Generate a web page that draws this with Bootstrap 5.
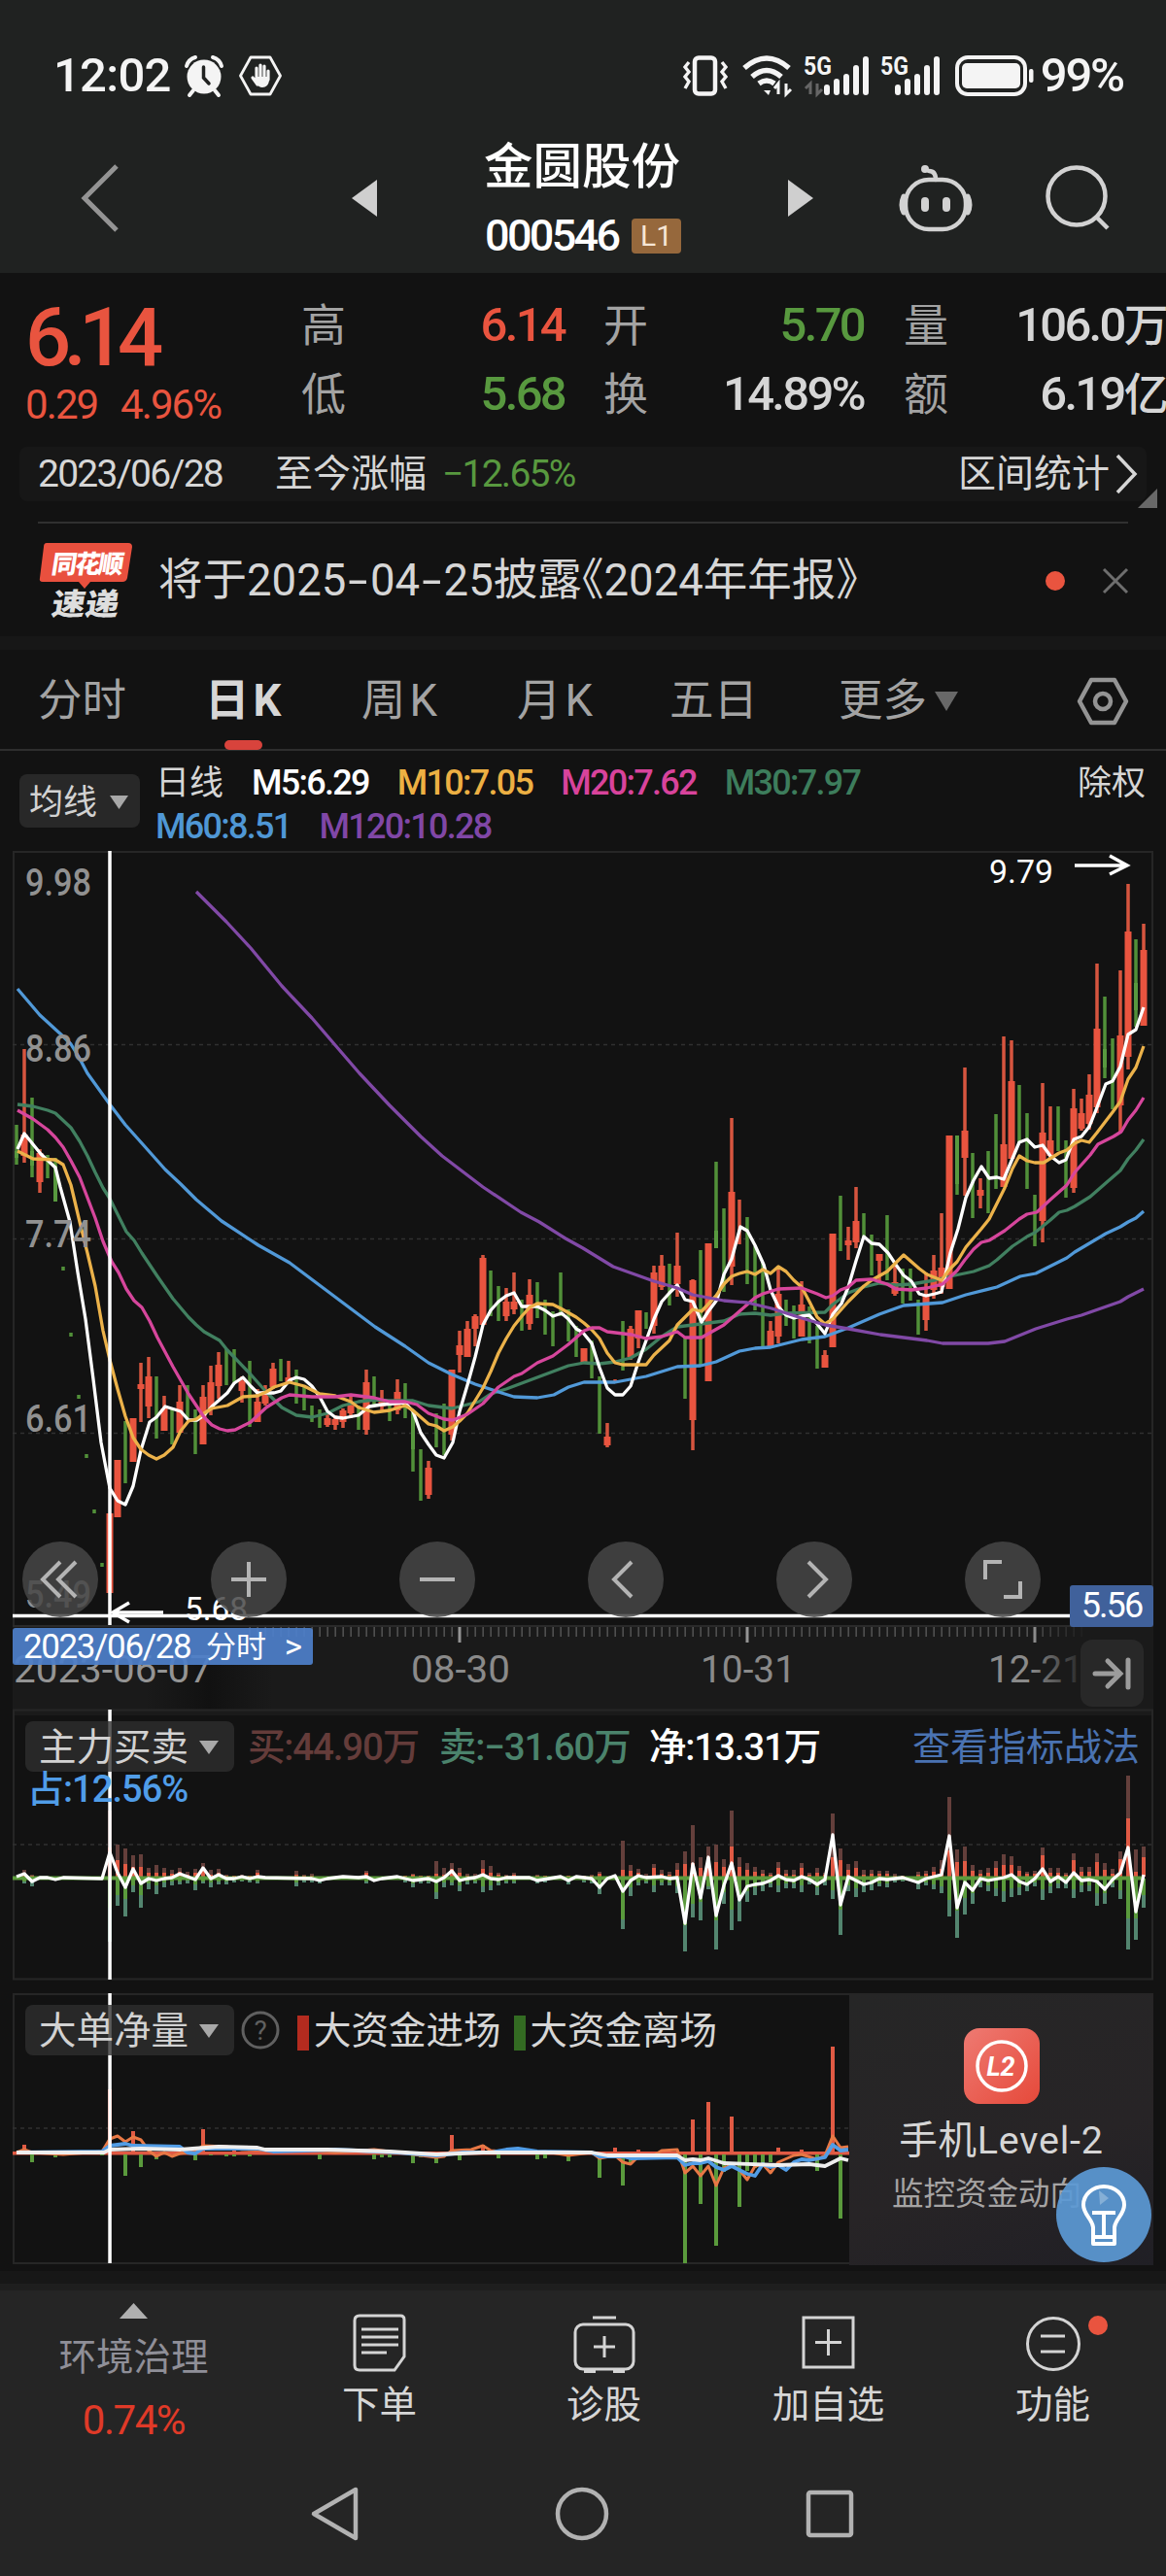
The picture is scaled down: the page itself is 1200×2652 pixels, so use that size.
<!doctype html>
<html lang="zh-CN">
<head>
  <meta charset="utf-8">
  <meta name="viewport" content="width=device-width, initial-scale=1">
  <title>金圆股份 000546</title>
  <link href="https://cdn.jsdelivr.net/npm/bootstrap@5.3.0/dist/css/bootstrap.min.css" rel="stylesheet">
  <style>
    :root {
      --up: #e9543f;
      --down: #58993f;
      --fg: #d6d6d6;
      --muted: #a3a3a3;
      --ink: #121212;
      --bar: #252525;
    }
    body {
      width: 1200px;
      background: var(--ink);
      color: var(--fg);
      font-family: Roboto, "Noto Sans CJK SC", sans-serif;
      line-height: 1;
      overflow-x: hidden;
    }
    svg { display: block; flex-shrink: 0; overflow: visible; }
    svg text { font-family: Roboto, "Noto Sans CJK SC", sans-serif; }
    .din { letter-spacing: -.055em; white-space: nowrap; }
    .c-up { color: var(--up); }
    .c-down { color: var(--down); }

    /* Status bar and title */
    .top-area { background: #202221; height: 281px; }
    .status-row { height: 134px; padding: 21px 44px 0 55px; color: #f4f4f4; }
    .status-row .clock { font-size: 49px; font-weight: 500; letter-spacing: -.015em; width: 135px; }
    .status-row .power { font-size: 49px; font-weight: 500; letter-spacing: -.045em; margin-left: 6px; }
    .status-row .wifi { margin-left: 14px; }
    .status-row .sim { margin-left: 11px; }
    .status-row .battery { margin-left: 14px; }
    .title-row { height: 144px; display: grid; grid-template-columns: 83px 279px 137px 202px 110px 114px 151px 1fr; align-items: center; }
    .title-row > svg { margin-top: -6px; }
    .title-row .go-next { grid-column: 6; }
    .stock-name { font-size: 50.5px; font-weight: 500; line-height: 76px; height: 73px; margin-left: -1px; color: #fff; }
    .stock-code { font-size: 45px; font-weight: 500; line-height: 72px; letter-spacing: -.06em; color: #fff; }
    .level-tag { width: 51px; height: 36px; font-size: 30px; line-height: 36px; background: #96683c; color: #f6e6d6; border-radius: 4px; }

    /* Quote */
    .quote { height: 179px; padding: 18px 0 0 26px; display: grid; grid-template-columns: 284px 271px 268px 270px; }
    .quote .col-b { margin: 0 -40px 0 40px; }
    .quote .col-c { margin: 0 -81px 0 81px; }
    .quote .pair { height: 71px; font-size: 46px; }
    .quote .lbl { color: var(--muted); }
    .quote .pair .din { font-size: 49px; font-weight: 500; }
    .quote .unit { font-size: 46px; }
    .last-price { font-size: 83px; font-weight: 500; height: 84px; line-height: 97px; letter-spacing: -.09em; }
    .last-diff { font-size: 42px; line-height: 68px; letter-spacing: -.045em; }
    .last-diff span:first-child { width: 98px; }
    .range-row { margin: 0 20px; height: 56px; padding: 0 8px 0 19px; background: #171717; border-radius: 8px; font-size: 39px; }
    .range-row .din { letter-spacing: -.045em; }
    .range-row .since { margin-left: 54px; }
    .corner-mark { position: absolute; right: 9px; top: 43px; }
    .rule { height: 2px; background: #303030; margin: 21px 39px 0; }
    .news-row { height: 116px; padding: 2px 39px 0 40px; font-size: 45.5px; }
    .news-row .headline { margin-left: 25px; }
    .news-row .hy { display: inline-block; transform: scaleX(1.6); margin: 0 6px; }
    .news-row .open-mark { margin-left: -.5em; }
    .news-row .dot { width: 20px; height: 20px; background: var(--up); }
    .news-row .shut { margin-left: 39px; }
    .band { height: 14px; background: #171717; }

    /* Period tabs */
    .tabs-row { height: 104px; padding: 3px 0 0 39px; display: grid; grid-template-columns: 176px 157px 160px 157px 174px 246px 1fr; align-items: center; font-size: 45.5px; color: var(--muted); border-bottom: 2px solid #2e2e2e; }
    .tabs-row .k { margin-left: 4px; }
    .tabs-row .on { color: var(--fg); font-weight: 700; left: -4px; }
    .tabs-row .on::after { content: ""; position: absolute; left: 20px; top: 63px; width: 39px; height: 10px; border-radius: 5px; background: #d8433c; }
    .tabs-row .more svg { margin-left: 8px; }

    /* Moving averages */
    .ma-row { height: 103px; padding-left: 20px; }
    .pick { background: rgba(46, 46, 46, .78); border-radius: 8px; color: #d2d2d2; white-space: nowrap; }
    .ma-row .pick { width: 124px; height: 55px; margin-top: 24px; padding: 3px 12px 0 10px; font-size: 35px; }
    .ma-list { margin-left: 16px; width: 800px; padding-top: 11px; font-size: 36px; line-height: 45px; column-gap: 29px; font-weight: 500; letter-spacing: -.048em; }
    .ma-list .kind { font-size: 35px; font-weight: 400; letter-spacing: 0; }
    .ma-list .m5 { color: #fff; }
    .ma-list .m10 { color: #edb043; }
    .ma-list .m20 { color: #d8439c; }
    .ma-list .m30 { color: #3d7d5c; }
    .ma-list .m60 { color: #4f97d5; }
    .ma-list .m120 { color: #8047a6; }
    .adjust { font-size: 35px; line-height: 67px; margin-right: 21px; }

    /* Charts */
    .k-area { height: 798px; }
    .k-tools { position: absolute; left: 23px; top: 711px; gap: 116px; }
    .k-tools span { width: 78px; height: 78px; border-radius: 50%; background: rgba(70, 70, 70, .85); }
    .price-tag { position: absolute; right: 13px; top: 756px; width: 86px; height: 43px; background: #40619b; color: #fff; font-size: 36px; line-height: 43px; border-radius: 3px; z-index: 2; }
    .date-tag { position: absolute; left: 13px; top: 2px; width: 309px; height: 38px; padding: 0 11px; background: rgba(78, 127, 201, .93); color: #fff; font-size: 35px; border-radius: 3px; }
    .date-tag .din { letter-spacing: -.04em; width: 188px; }
    .date-tag .kind { font-size: 31px; }
    .axis-area { height: 86px; }
    .to-end { position: absolute; left: 1112px; top: 14px; width: 65px; height: 69px; border-radius: 12px; background: #282828; }
    .sub-panel { height: 292px; }
    .sub-panel.last { height: 286px; }
    .sub-panel .plot { position: absolute; left: 0; top: 0; }
    .sub-head { position: relative; padding: 12px 27px 0 26px; font-size: 38.5px; height: 64px; white-space: nowrap; }
    .sub-head .pick { width: 215px; height: 52px; padding: 2px 16px 0 14px; }
    .sub-head .vals { height: 52px; font-weight: 500; letter-spacing: -.03em; padding-top: 3px; }
    .vals .buy { color: #643c3a; margin-left: 14px; width: 197px; }
    .vals .sell { color: #4b836c; width: 216px; }
    .vals .sum { color: #fff; }
    .vals .tips { color: #4a73b2; font-weight: 400; letter-spacing: 0; font-size: 39px; margin-right: -13px; }
    .sub-note { position: relative; padding-left: 28px; font-size: 38px; line-height: 36px; color: #509de8; font-weight: 500; }
    .sub-note.din { letter-spacing: -.025em; }
    .legend-row { height: 52px; padding-top: 2px; }
    .legend-row .help { margin-left: 7px; }
    .key { width: 12px; height: 36px; margin: 4px 5px 0 13px; background: #336b22; }
    .key.in { background: #b42b1f; margin-left: 18px; }
    .promo { position: absolute; left: 874px; top: 1px; width: 313px; height: 279px; background: linear-gradient(160deg, #262626, #272426 60%, #201f25); }
    .promo .l2 { width: 78px; height: 78px; margin-top: 35px; border-radius: 16px; background: linear-gradient(135deg, #ee7a72, #e6493a); }
    .promo .name { font-size: 39.5px; line-height: 48px; margin-top: 14px; letter-spacing: .02em; }
    .promo .desc { font-size: 32.5px; line-height: 40px; margin: 11px 30px 0 0; color: #a5a3a3; }
    .bulb { position: absolute; left: 1087px; top: 179px; }

    /* Bottom bars */
    .foot-edge { height: 20px; background: linear-gradient(#171717 0 13px, #1e1e1e 13px); }
    .foot { height: 294px; background: var(--bar); }
    .foot-tabs { display: grid; grid-template-columns: 275px repeat(4, 231px); height: 170px; font-size: 38.5px; }
    .foot-tabs .cell { padding-top: 22px; }
    .foot-tabs .cap { margin-top: 9px; line-height: 46px; }
    .foot-tabs .sector { color: #8f8f98; padding-top: 13px; }
    .sector .name { margin-top: 17px; line-height: 46px; }
    .sector .rate { color: #e03a28; font-size: 42px; line-height: 83px; letter-spacing: -.035em; }
    .sys-nav { height: 120px; padding-left: 319px; }
    .sys-nav svg + svg { margin-left: 199px; }
  </style>
</head>
<body>
  <header class="top-area">
    <!-- Status bar -->
    <div class="status-row d-flex align-items-center">
      <span class="clock">12:02</span>
      <svg width="40" height="42" viewBox="0 0 40 42" fill="none" stroke="#f4f4f4" stroke-width="4" stroke-linecap="round">
        <circle cx="20" cy="22" r="17.500" fill="#f4f4f4" stroke="none"/>
        <path d="M2 11Q4 4 11 2M38 11Q36 4 29 2M9 36L5 41M31 36L35 41"/>
        <path d="M19.500 12V23L25 29" stroke="#202221" stroke-width="3.500"/>
      </svg>
      <svg class="ms-3" width="44" height="42" viewBox="0 0 44 42" fill="none" stroke="#f4f4f4" stroke-width="2.800" stroke-linejoin="round" stroke-linecap="round">
        <path d="M12 2H32L42.500 21L32 40H12L1.500 21Z"/>
        <path d="M18 24V13M22 22V10M26 22V11M30 25V16M14 23L19 30" stroke-width="3.200"/>
        <path d="M17 22H31V26Q30 33 24 33Q20 33 17 28Z" fill="#f4f4f4" stroke="none"/>
      </svg>
      <svg class="ms-auto" width="48" height="42" viewBox="0 0 48 42" fill="none" stroke="#f4f4f4" stroke-width="3.400">
        <rect x="13" y="2.500" width="21" height="37" rx="4" stroke-width="4.500"/>
        <path d="M7 7L3 12L7 17L3 22L7 27L3 34M41 7L45 12L41 17L45 22L41 27L45 34"/>
      </svg>
      <svg class="wifi" width="52" height="42" viewBox="0 0 52 42" fill="none" stroke="#f4f4f4" stroke-width="5.500">
        <path d="M2 13Q25 -7 48 13M10 22Q25 9 40 22M17 29Q25 23 33 29"/>
        <path d="M22 36L27 41L29 36Z" fill="#f4f4f4" stroke="none"/>
        <path d="M37 40V29L33 34M45 29V40L50 35" stroke-width="3"/>
      </svg>
      <svg class="sim" width="68" height="42" viewBox="0 0 68 42">
        <text x="0" y="20" font-size="26" font-weight="700" textLength="29" lengthAdjust="spacingAndGlyphs" fill="#f4f4f4">5G</text>
        <path d="M24 38V33M34 38V27M44 38V22M54 38V13M64 38V4" stroke="#f4f4f4" stroke-width="6" stroke-linecap="round"/>
        <path d="M7 40V29L2 34M14 29V40L19 35" stroke="#666" stroke-width="3" fill="none"/>
      </svg>
      <svg class="sim" width="63" height="42" viewBox="0 0 63 42">
        <text x="0" y="20" font-size="26" font-weight="700" textLength="29" lengthAdjust="spacingAndGlyphs" fill="#f4f4f4">5G</text>
        <path d="M18 38V33M28 38V27M38 38V22M48 38V13M58 38V4" stroke="#f4f4f4" stroke-width="6" stroke-linecap="round"/>
      </svg>
      <svg class="battery" width="82" height="42" viewBox="0 0 82 42">
        <rect x="2" y="2" width="70" height="38" rx="11" fill="none" stroke="#f4f4f4" stroke-width="4"/>
        <rect x="7" y="8" width="60" height="26" rx="5" fill="#f4f4f4"/>
        <rect x="76" y="14" width="4.500" height="14" rx="2" fill="#f4f4f4"/>
      </svg>
      <span class="power">99%</span>
    </div>
    <!-- Stock title -->
    <div class="title-row">
      <span></span>
      <svg width="40" height="70" viewBox="0 0 40 70" fill="none" stroke="#949494" stroke-width="5"><path d="M37 2L4 35L37 68"/></svg>
      <svg width="26" height="40" viewBox="0 0 26 40" fill="#cfcfcf"><path d="M26 1V39L0 20Z"/></svg>
      <div>
        <div class="stock-name text-nowrap">金圆股份</div>
        <div class="d-flex align-items-center justify-content-between">
          <span class="stock-code">000546</span>
          <span class="level-tag text-center">L1</span>
        </div>
      </div>
      <svg class="go-next" width="26" height="40" viewBox="0 0 26 40" fill="#cfcfcf"><path d="M0 1V39L26 20Z"/></svg>
      <svg width="76" height="70" viewBox="0 0 76 70" fill="none" stroke="#d2d2d2" stroke-width="4.500" stroke-linecap="round">
        <path d="M38 16Q38 7 31 7"/><circle cx="27" cy="5" r="3" fill="#d2d2d2" stroke-width="2"/>
        <rect x="7" y="16" width="62" height="51" rx="24"/>
        <path d="M5 33Q1 42 5 50M71 33Q75 42 71 50" stroke-width="5"/>
        <path d="M27 38V45M49 38V45" stroke-width="8"/>
      </svg>
      <svg width="68" height="66" viewBox="0 0 68 66" fill="none" stroke="#d2d2d2" stroke-width="4.500"><circle cx="32" cy="31" r="29.500"/><path d="M52 52L64 64"/></svg>
    </div>
  </header>

  <!-- Quote -->
  <section class="quote">
    <div>
      <div class="last-price text-nowrap c-up">6.14</div>
      <div class="last-diff text-nowrap c-up d-flex"><span>0.29</span><span>4.96%</span></div>
    </div>
    <div>
      <div class="pair d-flex align-items-center justify-content-between"><span class="lbl">高</span><span class="din c-up">6.14</span></div>
      <div class="pair d-flex align-items-center justify-content-between"><span class="lbl">低</span><span class="din c-down">5.68</span></div>
    </div>
    <div class="col-b">
      <div class="pair d-flex align-items-center justify-content-between"><span class="lbl">开</span><span class="din c-down">5.70</span></div>
      <div class="pair d-flex align-items-center justify-content-between"><span class="lbl">换</span><span class="din">14.89%</span></div>
    </div>
    <div class="col-c">
      <div class="pair d-flex align-items-center justify-content-between"><span class="lbl">量</span><span class="din">106.0<span class="unit">万</span></span></div>
      <div class="pair d-flex align-items-center justify-content-between"><span class="lbl">额</span><span class="din">6.19<span class="unit">亿</span></span></div>
    </div>
  </section>
  <div class="position-relative">
    <div class="range-row d-flex align-items-center">
      <span class="din">2023/06/28</span>
      <span class="since">至今涨幅</span>
      <span class="din c-down ms-3">−12.65%</span>
      <span class="ms-auto">区间统计</span>
      <svg class="ms-1" width="26" height="42" viewBox="0 0 26 42" fill="none" stroke="#d6d6d6" stroke-width="3.500"><path d="M4 2L22 21L4 40"/></svg>
    </div>
    <svg class="corner-mark" width="20" height="20" viewBox="0 0 20 20" fill="#686868"><path d="M20 0V20H0Z"/></svg>
    <div class="rule"></div>
    <div class="news-row d-flex align-items-center">
      <svg width="98" height="80" viewBox="0 0 98 80">
        <path d="M8 1H92Q96 1 96 5L91 37Q90 41 86 41H53L47 48L41 41H4Q0 41 1 37L5 5Q5 1 8 1Z" fill="#e9503e"/>
        <text transform="translate(12 32) skewX(-9)" font-size="26" font-weight="900" fill="#fff" textLength="74">同花顺</text>
        <text transform="translate(12 75) skewX(-9)" font-size="31" font-weight="900" fill="#dedede" textLength="69" lengthAdjust="spacingAndGlyphs">速递</text>
      </svg>
      <span class="headline text-nowrap">将于2025<span class="hy">-</span>04<span class="hy">-</span>25披露<span class="open-mark">《</span>2024年年报》</span>
      <span class="dot rounded-circle ms-auto"></span>
      <svg class="shut" width="26" height="26" viewBox="0 0 26 26" stroke="#6e6e6e" stroke-width="3"><path d="M1 1L25 25M25 1L1 25"/></svg>
    </div>
  </div>
  <div class="band"></div>

  <!-- Period tabs -->
  <nav class="tabs-row">
    <span>分时</span>
    <span class="on position-relative">日<span class="k">K</span></span>
    <span>周<span class="k">K</span></span>
    <span>月<span class="k">K</span></span>
    <span>五日</span>
    <span class="more d-flex align-items-center">更多<svg width="24" height="20" fill="#686868"><path d="M0 0H24L12 20Z"/></svg></span>
    <svg width="52" height="50" viewBox="0 0 52 50" fill="none" stroke="#949494" stroke-width="4.500" stroke-linejoin="round"><path d="M14 3H38L50 25L38 47H14L2 25Z"/><circle cx="26" cy="25" r="8"/></svg>
  </nav>

  <!-- Moving averages -->
  <section class="ma-row d-flex">
    <div class="pick d-flex align-items-center justify-content-between"><span>均线</span><svg width="19" height="14" fill="#a8a8a8"><path d="M0 0H19L9.500 14Z"/></svg></div>
    <div class="ma-list d-flex flex-wrap align-content-start">
      <span class="kind">日线</span>
      <span class="m5">M5:6.29</span>
      <span class="m10">M10:7.05</span>
      <span class="m20">M20:7.62</span>
      <span class="m30">M30:7.97</span>
      <span class="m60">M60:8.51</span>
      <span class="m120">M120:10.28</span>
    </div>
    <span class="adjust ms-auto">除权</span>
  </section>

  <!-- Daily K chart -->
  <section class="k-area position-relative">
    <svg id="kChart" width="1200" height="798" viewBox="0 876 1200 798"></svg>
    <div class="k-tools d-flex">
      <span><svg width="78" height="78" viewBox="0 0 78 78" fill="none" stroke="#b4b4b4" stroke-width="4"><path d="M39 21L21 39L39 57M55 21L37 39L55 57"/></svg></span>
      <span><svg width="78" height="78" viewBox="0 0 78 78" fill="none" stroke="#b4b4b4" stroke-width="4"><path d="M21 39H57M39 21V57"/></svg></span>
      <span><svg width="78" height="78" viewBox="0 0 78 78" fill="none" stroke="#b4b4b4" stroke-width="4"><path d="M21 39H57"/></svg></span>
      <span><svg width="78" height="78" viewBox="0 0 78 78" fill="none" stroke="#b4b4b4" stroke-width="4"><path d="M45 21L27 39L45 57"/></svg></span>
      <span><svg width="78" height="78" viewBox="0 0 78 78" fill="none" stroke="#b4b4b4" stroke-width="4"><path d="M33 21L51 39L33 57"/></svg></span>
      <span><svg width="78" height="78" viewBox="0 0 78 78" fill="none" stroke="#b4b4b4" stroke-width="4"><path d="M21 39V21H38M57 41V57H40"/></svg></span>
    </div>
    <div class="price-tag din text-center">5.56</div>
  </section>

  <!-- Time axis -->
  <section class="axis-area position-relative">
    <svg id="timeAxis" width="1200" height="86" viewBox="0 1674 1200 86"></svg>
    <div class="date-tag d-flex align-items-center"><span class="din">2023/06/28</span><span class="kind">分时</span><span class="ms-auto">&gt;</span></div>
    <div class="to-end"><svg width="65" height="69" viewBox="0 0 65 69" fill="none" stroke="#9c9c9c" stroke-width="5" stroke-linecap="round"><path d="M15 35H40M28 22L41 35L28 48M49 21V49"/></svg></div>
  </section>

  <!-- Main force buy / sell -->
  <section class="sub-panel position-relative">
    <svg class="plot" id="forceChart" width="1200" height="280" viewBox="0 1760 1200 280"></svg>
    <div class="sub-head d-flex">
      <div class="pick d-flex align-items-center justify-content-between"><span>主力买卖</span><svg width="20" height="14" fill="#a8a8a8"><path d="M0 0H20L10 14Z"/></svg></div>
      <div class="vals d-flex align-items-center flex-grow-1">
        <span class="buy">买:44.90万</span>
        <span class="sell">卖:−31.60万</span>
        <span class="sum">净:13.31万</span>
        <span class="tips ms-auto me-0">查看指标战法</span>
      </div>
    </div>
    <div class="sub-note din">占:12.56%</div>
  </section>

  <!-- Large order net volume -->
  <section class="sub-panel last position-relative">
    <svg class="plot" id="netChart" width="1200" height="280" viewBox="0 2052 1200 280"></svg>
    <div class="sub-head d-flex">
      <div class="pick d-flex align-items-center justify-content-between"><span>大单净量</span><svg width="20" height="14" fill="#a8a8a8"><path d="M0 0H20L10 14Z"/></svg></div>
      <div class="legend-row d-flex align-items-center">
        <svg class="help" width="40" height="40" viewBox="0 0 40 40"><circle cx="20" cy="19" r="18" fill="none" stroke="#606060" stroke-width="3"/><text x="20" y="29" font-size="28" fill="#606060" text-anchor="middle">?</text></svg>
        <span class="key in"></span><span>大资金进场</span>
        <span class="key"></span><span>大资金离场</span>
      </div>
    </div>
    <div class="promo d-flex flex-column align-items-center">
      <div class="l2"><svg width="78" height="78" viewBox="0 0 78 78"><circle cx="39" cy="39" r="25" fill="none" stroke="#fff" stroke-width="3.500"/><text x="38" y="49" font-size="27" font-weight="700" font-style="italic" fill="#fff" text-anchor="middle">L2</text></svg></div>
      <div class="name text-nowrap">手机Level-2</div>
      <div class="desc text-nowrap">监控资金动向</div>
    </div>
    <svg class="bulb" width="98" height="98" viewBox="0 0 98 98" fill="none" stroke="#fff" stroke-width="4">
      <circle cx="49" cy="49" r="49" fill="#5b99d4" fill-opacity=".93" stroke="none"/>
      <path d="M44 24L54 32L45 39Z" fill="#85afd6" stroke="none"/>
      <path d="M38 62C37 53 28 49 28 39A21 19 0 0 1 70 39C70 49 61 53 60 62V79H38ZM38 72H60M37 47H61M49 47V72" stroke-linejoin="round"/>
    </svg>
  </section>

  <!-- Bottom bars -->
  <div class="foot-edge"></div>
  <footer class="foot">
    <div class="foot-tabs">
      <div class="sector text-center">
        <svg class="mx-auto" width="29" height="16" fill="#b0b0b0"><path d="M14.500 0L29 16H0Z"/></svg>
        <div class="name">环境治理</div>
        <div class="rate">0.74%</div>
      </div>
      <div class="cell text-center">
        <svg class="mx-auto" width="64" height="64" viewBox="0 0 64 64" fill="none" stroke="#d4d4d4" stroke-width="3"><path d="M11 4H53Q57 4 57 8V46L47 60H11Q6 60 6 55V9Q6 4 11 4Z"/><path d="M13 18H51M13 26H51M13 34H51M13 42H39"/></svg>
        <div class="cap">下单</div>
      </div>
      <div class="cell text-center">
        <svg class="mx-auto" width="66" height="64" viewBox="0 0 66 64" fill="none" stroke="#d4d4d4" stroke-width="3"><path d="M21 6H45"/><rect x="3" y="13" width="60" height="46" rx="8"/><path d="M22 36H44M33 25V47"/><path d="M12 61H24M42 61H54" stroke-width="4"/></svg>
        <div class="cap">诊股</div>
      </div>
      <div class="cell text-center">
        <svg class="mx-auto" width="64" height="64" viewBox="0 0 64 64" fill="none" stroke="#d4d4d4" stroke-width="3"><rect x="6" y="6" width="51" height="51"/><path d="M18 31.500H45M31.500 18V45"/></svg>
        <div class="cap">加自选</div>
      </div>
      <div class="cell text-center">
        <svg class="mx-auto" width="64" height="64" viewBox="0 0 64 64" fill="none" stroke="#d4d4d4" stroke-width="3"><circle cx="32" cy="33" r="26.500"/><path d="M19 25H44M19 41H44"/><circle cx="78" cy="14" r="10" fill="#e9543f" stroke="none"/></svg>
        <div class="cap">功能</div>
      </div>
    </div>
    <div class="sys-nav d-flex align-items-center">
      <svg width="52" height="58" viewBox="0 0 52 58" fill="none" stroke="#b2b2b2" stroke-width="4.500" stroke-linejoin="round"><path d="M47 4V54L4 29Z"/></svg>
      <svg width="58" height="58" viewBox="0 0 58 58" fill="none" stroke="#b2b2b2" stroke-width="4.500"><circle cx="29" cy="29" r="25"/></svg>
      <svg width="54" height="54" viewBox="0 0 54 54" fill="none" stroke="#b2b2b2" stroke-width="4.500"><rect x="5" y="5" width="44" height="44" rx="2"/></svg>
    </div>
  </footer>

  <script src="https://cdn.jsdelivr.net/npm/bootstrap@5.3.0/dist/js/bootstrap.bundle.min.js"></script>
  <script>
    const RED = "#e9543f", GREEN = "#58993f";
    const xAt = i => 17 + i * 8;
    const rect = (x, y, w, h, c) => `<rect x="${x}" y="${y}" width="${w}" height="${h}" fill="${c}"/>`;
    const line = (pts, c, w = 3) => `<polyline points="${pts}" fill="none" stroke="${c}" stroke-width="${w}" stroke-linejoin="round"/>`;
    const dash = y => `<path d="M13 ${y}H1186" stroke="#303030" stroke-width="1.500" stroke-dasharray="4 4"/>`;
    const label = (s, x, y, w, size, c, more = "") => `<text x="${x}" y="${y}" font-size="${size}" textLength="${w}" lengthAdjust="spacingAndGlyphs" fill="${c}" ${more}>${s}</text>`;

    // One candle per entry: colour, high, low, body top, body bottom
    const candles = `g 1158 1199 1185 1192|r 1080 1197 1168 1190|g 1130 1212 1185 1200|r 1183 1228 1187 1217|g 1189 1213|g 1192 1237 1200 1237|g 1304 1308|g 1372 1376|g 1436 1440|g 1497 1501|g 1554 1558|g 1609 1613|
r 1558 1640 1558 1640|r 1503 1562 1503 1562|g 1463 1527|r 1460 1505 1460 1505|r 1403 1464 1425 1430|r 1397 1460 1417 1448|g 1417 1481|r 1437 1473 1450 1473|g 1450 1487|r 1426 1475 1443 1475|g 1426 1460|g 1451 1497|r 1426 1487 1438 1487|r 1406 1457 1423 1450|r 1392 1440 1405 1427|g 1389 1426|g 1389 1423|r 1417 1444 1422 1432|g 1401 1469|r 1430 1464 1443 1464|r 1426 1447 1432 1445|r 1403 1430 1409 1428|g 1399 1422|r 1401 1423 1418 1423|g 1410 1445|g 1428 1452|g 1447 1464|g 1451 1470|r 1455 1469 1460 1467|r 1457 1472 1461 1467|r 1450 1470 1452 1464|r 1437 1460 1447 1455|g 1447 1472|r 1410 1477 1423 1472|g 1417 1447|r 1431 1452 1440 1448|g 1443 1463|r 1420 1456 1433 1452|g 1424 1460|g 1453 1515 1453 1492|g 1492 1545|r 1504 1543 1511 1539|g 1455 1490|g 1445 1498|r 1410 1483 1410 1477|r 1370 1413 1385 1395|r 1360 1397 1368 1397|r 1353 1386 1355 1368|
r 1292 1364 1295 1364|g 1308 1355|g 1324 1360|r 1326 1360 1340 1355|r 1310 1353 1340 1348|g 1338 1370|r 1317 1369 1333 1363|g 1320 1357|g 1338 1374|g 1350 1386|g 1310 1355|g 1348 1381|g 1365 1397|r 1388 1403 1388 1403|g 1380 1419|g 1417 1476|r 1465 1490 1479 1488|r 1420 1423|g 1360 1411|r 1365 1400 1368 1397|r 1349 1388 1349 1378|g 1351 1368|r 1303 1373 1310 1365|r 1292 1328 1303 1325|g 1301 1344|r 1269 1335 1303 1322|g 1377 1440|r 1317 1493 1318 1462|g 1287 1405|r 1280 1422 1280 1422|g 1196 1285 1267 1285|g 1244 1330|r 1151 1323 1227 1304|r 1235 1281|g 1253 1322|g 1283 1349|g 1300 1387|r 1360 1386 1370 1386|r 1305 1383 1332 1376|g 1338 1365|g 1344 1378|r 1319 1376 1343 1376|g 1345 1383|g 1365 1409|r 1390 1408 1395 1408|r 1270 1387 1270 1387|g 1231 1288|r 1263 1297 1277 1282|r 1222 1285 1257 1279|g 1249 1275|g 1271 1313|r 1291 1320 1291 1298|g 1251 1318|r 1303 1334 1320 1332|g 1306 1342|g 1306 1339|g 1338 1374|r 1310 1370 1333 1359|r 1292 1337 1308 1328|r 1249 1332 1305 1325|
r 1169 1327 1169 1327|g 1169 1230 1169 1219|r 1099 1231 1164 1192|g 1187 1254|r 1213 1244 1225 1231|g 1185 1249|g 1147 1224|r 1067 1222 1178 1222|r 1071 1193 1113 1193|g 1117 1177|g 1146 1224|g 1230 1283|r 1115 1279 1166 1257|r 1139 1192 1174 1190|g 1139 1185|g 1174 1233|r 1121 1228 1141 1223|r 1131 1164 1146 1162|r 1106 1163 1127 1157|r 992 1146 1059 1140|g 1026 1110 1080 1099|g 1069 1142|r 999 1166 1066 1138|r 910 1101 959 1088|g 967 1057 1012 1040|r 951 1056 978 1056`
      .replace(/\n/g, "").split("|").map(s => s.split(" "));

    const ma = {
      "#418060": "18,1137 34,1139 49,1143 57,1146 73,1161 82,1175 90,1190 98,1207 106,1223 113,1234 130,1268 138,1277 146,1290 162,1314 178,1337 194,1356 202,1364 210,1371 226,1380 234,1390 258,1415 274,1433 290,1449 305,1457 321,1459 337,1455 353,1447 369,1443 385,1441 401,1442 425,1442 441,1447 465,1450 481,1446 493,1443 505,1435 521,1430 545,1421 569,1412 585,1406 601,1403 617,1404 633,1402 649,1398 665,1389 681,1376 697,1366 721,1363 745,1360 761,1353 777,1352 793,1354 809,1352 849,1351 857,1343 873,1331 889,1325 905,1321 922,1323 938,1322 962,1318 978,1314 1002,1309 1018,1303 1026,1297 1042,1283 1057,1273 1065,1269 1081,1256 1090,1248 1098,1246 1106,1242 1122,1232 1138,1218 1153,1205 1161,1193 1169,1184 1177,1173",
      "#5199d8": "18,1018 41,1045 65,1067 73,1075 81,1088 90,1105 113,1137 129,1158 146,1177 170,1204 186,1219 202,1235 228,1257 266,1282 298,1300 330,1324 362,1348 386,1366 417,1386 441,1403 465,1415 489,1425 513,1433 529,1438 553,1439 570,1436 585,1428 601,1423 633,1423 649,1420 665,1417 697,1407 721,1406 737,1402 761,1391 777,1388 793,1387 825,1379 849,1376 873,1367 905,1353 930,1344 970,1341 994,1333 1026,1325 1050,1314 1066,1311 1098,1295 1106,1289 1138,1270 1153,1263 1161,1258 1169,1254 1177,1247",
      "#fff": "18,1183 25,1167 42,1188 57,1202 62,1222 72,1258 80,1310 88,1358 96,1420 104,1485 113,1532 121,1545 129,1549 137,1530 145,1493 154,1464 161,1459 170,1448 186,1453 194,1462 203,1462 210,1457 218,1448 234,1434 241,1424 250,1418 258,1427 265,1434 282,1434 289,1432 298,1421 305,1418 313,1420 321,1427 329,1438 337,1453 345,1459 353,1460 369,1457 380,1448 393,1446 417,1444 425,1453 433,1475 441,1487 449,1498 457,1501 466,1485 473,1453 481,1426 489,1397 497,1364 505,1349 513,1340 521,1334 529,1331 537,1345 553,1345 561,1349 569,1355 578,1352 585,1358 593,1368 600,1372 609,1383 617,1408 625,1429 633,1436 641,1436 649,1427 657,1402 665,1380 673,1358 681,1340 689,1331 697,1323 705,1338 713,1340 722,1361 729,1350 738,1338 745,1312 753,1296 762,1263 769,1267 777,1282 786,1302 793,1328 801,1345 809,1354 817,1357 825,1355 833,1354 841,1363 849,1373 857,1353 866,1342 873,1325 881,1298 889,1273 897,1280 905,1281 914,1290 922,1302 930,1313 938,1319 946,1332 953,1334 962,1332 969,1330 978,1290 986,1265 994,1233 1002,1215 1010,1201 1018,1213 1026,1212 1033,1214 1041,1195 1049,1176 1057,1173 1065,1181 1073,1179 1081,1190 1090,1197 1097,1194 1105,1173 1113,1170 1121,1160 1129,1140 1138,1116 1145,1113 1153,1098 1161,1065 1169,1060 1177,1037",
      "#ecb24a": "18,1185 34,1193 57,1194 65,1199 73,1220 82,1258 90,1290 98,1324 106,1370 113,1400 121,1430 129,1458 137,1480 145,1492 153,1498 161,1502 169,1498 178,1490 186,1473 194,1463 202,1461 210,1455 218,1450 234,1447 250,1438 265,1437 274,1433 282,1428 298,1423 313,1427 329,1435 345,1437 361,1443 369,1449 385,1454 401,1452 417,1447 425,1452 433,1459 441,1466 449,1468 457,1473 466,1469 473,1463 481,1455 489,1442 497,1429 505,1412 513,1393 521,1378 529,1365 537,1355 545,1346 553,1342 569,1343 577,1347 593,1356 601,1362 609,1369 617,1378 625,1393 633,1403 641,1405 665,1405 673,1395 689,1380 697,1364 713,1348 722,1350 737,1334 745,1322 753,1314 761,1311 769,1309 777,1312 785,1307 793,1311 801,1304 809,1309 817,1318 825,1325 833,1340 841,1356 849,1363 857,1358 873,1340 889,1324 897,1318 913,1309 921,1301 930,1292 938,1299 946,1306 954,1312 969,1318 977,1307 985,1299 994,1284 1010,1265 1018,1255 1026,1239 1034,1223 1042,1203 1049,1190 1057,1195 1065,1197 1074,1197 1090,1187 1098,1184 1106,1177 1113,1174 1121,1176 1129,1166 1145,1145 1153,1134 1161,1111 1169,1099 1177,1077",
      "#d6469c": "18,1143 34,1152 49,1163 57,1171 65,1181 73,1195 82,1212 90,1233 98,1254 106,1278 115,1299 122,1310 130,1327 138,1339 146,1346 154,1360 162,1377 178,1407 194,1435 202,1447 210,1459 218,1467 226,1471 234,1473 242,1472 258,1464 274,1449 290,1439 298,1436 321,1438 345,1438 361,1436 385,1439 401,1443 417,1443 429,1446 441,1455 457,1461 466,1462 481,1456 497,1445 513,1428 529,1417 537,1414 553,1403 569,1396 585,1384 601,1370 609,1367 617,1367 625,1371 650,1374 665,1378 681,1376 697,1371 705,1377 722,1377 745,1364 761,1350 777,1336 785,1332 801,1327 825,1326 841,1332 850,1336 857,1334 865,1328 873,1325 881,1318 897,1317 913,1322 922,1327 938,1328 954,1326 970,1322 985,1308 993,1297 1002,1286 1010,1279 1018,1277 1034,1267 1049,1255 1057,1250 1067,1248 1081,1235 1098,1220 1106,1207 1122,1189 1130,1178 1146,1170 1154,1165 1161,1153 1169,1143 1177,1130",
      "#8149a6": "202,918 233,949 258,976 290,1015 321,1048 345,1076 370,1105 401,1138 433,1170 455,1190 476,1206 497,1222 536,1248 555,1258 582,1275 600,1285 631,1304 673,1319 697,1326 713,1333 745,1339 769,1341 794,1347 825,1357 849,1364 873,1368 906,1374 954,1380 970,1383 1017,1383 1034,1381 1066,1368 1098,1358 1113,1354 1153,1340 1161,1335 1177,1327"
    };

    let k = `<path d="M14 1674V877H1186V1674Z" fill="none" stroke="#262626" stroke-width="2"/>` + dash(1075.5) + dash(1275.5) + dash(1475.5);
    candles.forEach(([c, hi, lo, top, bot], i) => {
      const x = xAt(i), red = c === "r";
      k += rect(x - 1.75, hi, 3.5, lo - hi, red ? "#d6553f" : "#519039");
      if (top) k += red ? rect(x - 3.5, top, 7, bot - top, RED) : rect(x - 2, top, 4, bot - top, GREEN);
    });
    for (const c in ma) k += line(ma[c], c, 3.3);
    [["9.98", 922], ["8.86", 1093], ["7.74", 1284], ["6.61", 1474], ["5.49", 1655]].forEach(([s, y]) => k += label(s, 26, y, 68, 38, "#919191", 'font-weight="500"'));
    k += `<path d="M13 1663.500H1186M113 876V1674" stroke="#fff" stroke-width="3.500"/>`;
    k += `<path d="M116 1660H168M133 1650L116 1660L133 1670M1106 891H1160M1142 881L1160 891L1142 900" stroke="#fff" stroke-width="3.500" fill="none"/>`;
    k += label("5.68", 190, 1668, 65, 34, "#fff") + label("9.79", 1018, 909, 66, 34, "#fff");
    document.getElementById("kChart").innerHTML = k;

    // Tick ruler under the chart
    let ax = `<defs><linearGradient id="shade"><stop offset="0" stop-color="#121212" stop-opacity="0"/><stop offset=".5" stop-color="#111"/><stop offset="1" stop-color="#121212" stop-opacity="0"/></linearGradient>
      <linearGradient id="fade"><stop offset="0" stop-color="#1a1a1a" stop-opacity="0"/><stop offset="1" stop-color="#1a1a1a"/></linearGradient></defs>`;
    ax += rect(13, 1674, 1174, 86, "#1a1a1a") + rect(150, 1674, 130, 86, "url(#shade)") + rect(13, 1673, 1174, 2, "#2a2a2a");
    for (let i = 30; i < 138; i++) {
      const big = [57, 94, 131].includes(i);
      ax += rect(xAt(i) - (big ? 1.5 : .5), 1675, big ? 3 : 1.3, big ? 16 : 10, big ? "#949494" : "#5c5c5c");
    }
    ax += label("2023-06-07", 14, 1732, 204, 38, "#949494") + label("08-30", 423, 1732, 102, 38, "#8a8a8a") + label("10-31", 721, 1732, 98, 38, "#8a8a8a") + label("12-21", 1017, 1732, 98, 38, "#8a8a8a");
    ax += rect(1060, 1675, 60, 84, "url(#fade)") + rect(1120, 1675, 66, 84, "#1a1a1a");
    document.getElementById("timeAxis").innerHTML = ax;

    // Buy / sell bars: index, buy, inner buy, sell, inner sell
    const force = "1,7,3,5,3 2,2,1,8,4 12,68,30,65,30 13,33,17,28,17 14,29,13,39,21 15,22,10,14,7 16,23,10,30,17 17,9,4,11,5 18,12,4,16,7 19,9,4,9,4 20,7,3,7,3 21,9,5,6,3 22,5,2,5,2 23,8,4,12,6 24,14,9,5,3 25,7,2,9,4 26,8,4,6,3 27,2,1,6,3 28,1,1,4,2 29,2,1,3,2 30,1,1,4,2 31,7,4,5,3 36,6,2,8,4 37,2,1,4,2 38,3,1,4,2 39,0,0,5,3 45,6,4,5,3 50,1,1,4,2 51,3,2,9,5 52,1,1,5,3 53,1,1,5,3 54,16,3,21,14 55,9,2,9,4 56,14,8,7,4 57,9,4,13,7 58,3,1,6,3 59,3,1,5,3 60,17,8,14,8 61,11,4,12,7 62,4,2,7,4 63,2,1,5,3 64,4,2,5,3 67,2,1,5,3 68,1,1,4,2 71,1,1,6,3 73,1,1,4,2 74,2,1,5,3 75,5,3,16,9 78,37,7,52,42 79,12,6,18,9 80,8,4,7,4 81,3,1,5,3 82,13,9,14,7 83,7,3,7,4 84,5,2,7,4 85,14,7,15,8 86,26,13,75,48 87,53,14,40,26 88,20,9,43,24 89,31,20,11,8 90,33,15,73,43 91,18,10,26,14 92,68,31,53,32 93,20,10,44,20 94,14,7,24,13 95,10,5,17,9 96,7,3,13,7 97,4,2,9,5 98,15,9,14,7 99,7,3,10,5 100,7,2,10,5 101,14,9,14,7 102,4,2,6,3 103,9,4,17,9 104,4,2,7,3 105,65,20,21,12 106,29,17,58,32 107,13,7,13,7 108,16,9,19,10 109,7,2,14,7 110,7,3,12,6 111,6,3,8,5 112,6,3,9,5 113,3,1,4,2 114,1,1,3,1 116,5,2,11,5 117,6,3,7,4 118,10,5,11,6 119,17,8,15,8 120,82,27,39,22 121,28,15,61,33 122,31,16,37,20 123,12,6,26,15 124,7,3,9,4 125,9,4,13,7 126,16,9,18,10 127,23,12,24,13 128,21,12,19,10 129,11,6,17,9 130,5,3,13,7 131,6,3,8,4 132,30,22,22,11 133,9,4,15,8 134,9,4,10,5 135,4,2,10,5 136,24,17,20,11 137,10,5,14,7 138,10,5,13,7 139,24,15,28,15 140,14,7,26,15 141,8,3,9,5 142,26,18,21,12 143,104,60,73,41 144,28,5,63,41 145,31,20,30,17";
    const net = "0,1932 1,1929 2,1937 3,1933 4,1933 5,1935 6,1933 11,1934 12,1907 13,1928 14,1943 15,1924 16,1939 17,1934 18,1936 19,1934 20,1933 21,1929 22,1932 23,1935 24,1923 25,1934 26,1930 27,1934 28,1934 29,1932 30,1934 31,1932 32,1933 38,1934 39,1936 40,1934 42,1932 44,1933 45,1932 46,1936 47,1934 49,1932 51,1936 52,1935 53,1934 54,1937 55,1933 56,1926 57,1936 58,1934 59,1933 60,1930 61,1934 62,1935 63,1933 66,1933 67,1936 70,1932 71,1936 72,1932 74,1934 75,1943 76,1934 77,1931 78,1947 79,1936 80,1931 81,1933 83,1932 84,1934 85,1933 86,1980 87,1919 88,1954 89,1912 90,1972 91,1941 92,1918 93,1956 94,1942 95,1940 96,1939 97,1936 98,1931 99,1935 100,1936 101,1932 102,1935 103,1940 104,1935 105,1889 106,1961 107,1932 108,1936 109,1940 110,1938 111,1934 112,1935 114,1933 116,1938 117,1934 119,1930 120,1890 121,1964 122,1938 123,1946 124,1934 125,1936 127,1933 128,1930 129,1937 130,1940 131,1934 132,1924 133,1937 134,1932 135,1938 136,1928 137,1936 138,1935 139,1937 140,1945 141,1935 142,1928 143,1902 144,1968 145,1930";
    let f = rect(13, 1760, 1174, 6, "#1a1a1a") + `<rect x="14" y="1760.500" width="1172" height="277" fill="none" stroke="#262626" stroke-width="2"/>` + dash(1899);
    force.split(" ").forEach(row => {
      const [i, b, bi, s, si] = row.split(",").map(Number), x = xAt(i) - 2;
      f += rect(x, 1932 - b, 4, b, "#643f3b") + rect(x, 1932 - bi, 4, bi, "#e05a44") + rect(x, 1934, 4, s, "#53856f") + rect(x, 1934, 4, si, "#5a9a3c");
    });
    f += rect(13, 1931.5, 1165, 4, "#5c9a3c");
    f += line(net.split(" ").map(p => { const [i, y] = p.split(","); return xAt(+i) + "," + y; }).join(" "), "#fff", 3.3);
    f += rect(111.3, 1760, 3.5, 278, "#fff");
    document.getElementById("forceChart").innerHTML = f;

    // Net volume bars: x, end y
    const inflow = "25,2208 113,2151 137,2194 209,2192 241,2211 465,2198 497,2208 633,2211 657,2213 713,2182 729,2164 753,2179 801,2211 825,2213 857,2107";
    const outflow = "33,2226 57,2221 105,2219 129,2240 145,2231 161,2223 201,2224 217,2219 233,2220 241,2220 257,2220 329,2223 385,2223 393,2221 401,2221 425,2227 433,2221 449,2227 473,2224 513,2222 553,2223 561,2222 585,2225 617,2242 641,2250 649,2228 705,2330 721,2269 737,2312 745,2236 761,2272 769,2235 777,2232 785,2230 793,2226 841,2235 865,2284";
    let n = `<rect x="14" y="2053" width="1172" height="277" fill="none" stroke="#262626" stroke-width="2"/>` + dash(2191) + rect(13, 2215, 861, 3.5, "#e05a44");
    inflow.split(" ").forEach(p => { const [x, y] = p.split(","); n += rect(x - 2, y, 4, 2216 - y, "#e05a44"); });
    outflow.split(" ").forEach(p => { const [x, y] = p.split(","); n += rect(x - 2, 2218, 4, y - 2218, "#5a9a3c"); });
    n += line("17,2216 25,2213 33,2216 65,2218 105,2215 113,2202 121,2199 129,2205 137,2200 145,2203 153,2214 161,2220 169,2216 177,2220 185,2217 201,2215 209,2209 233,2210 249,2213 281,2214 310,2213 345,2216 385,2213 409,2216 433,2219 449,2221 457,2220 465,2214 485,2213 497,2209 505,2214 533,2216 561,2215 585,2219 609,2216 617,2222 633,2219 641,2226 649,2228 657,2220 673,2219 681,2214 697,2213 705,2237 713,2230 721,2240 729,2230 737,2250 745,2232 753,2229 761,2234 769,2244 777,2230 785,2228 793,2237 801,2226 817,2219 825,2218 841,2223 849,2219 857,2199 865,2211 873,2210", "#e87845", 3);
    n += line("17,2216 105,2215 113,2209 129,2207 137,2209 185,2210 193,2216 201,2217 209,2212 265,2212 281,2215 345,2213 409,2216 449,2219 477,2216 505,2216 521,2213 533,2212 553,2215 609,2216 617,2220 641,2220 649,2222 697,2221 705,2229 713,2227 721,2227 729,2225 737,2231 745,2234 753,2230 761,2234 769,2238 777,2240 785,2228 793,2231 801,2229 809,2234 817,2226 825,2223 833,2224 849,2221 857,2208 865,2214 873,2213", "#529de6", 3.8);
    n += line("17,2216 107,2216 113,2213 145,2212 185,2213 225,2210 265,2211 273,2213 337,2213 401,2215 449,2218 497,2216 609,2216 625,2219 649,2219 697,2219 705,2224 713,2223 721,2224 729,2222 745,2227 801,2229 833,2228 849,2230 865,2222 873,2224", "#eee", 3.8);
    n += rect(111.3, 2052, 3.5, 278, "#fff");
    document.getElementById("netChart").innerHTML = n;
  </script>
</body>
</html>
